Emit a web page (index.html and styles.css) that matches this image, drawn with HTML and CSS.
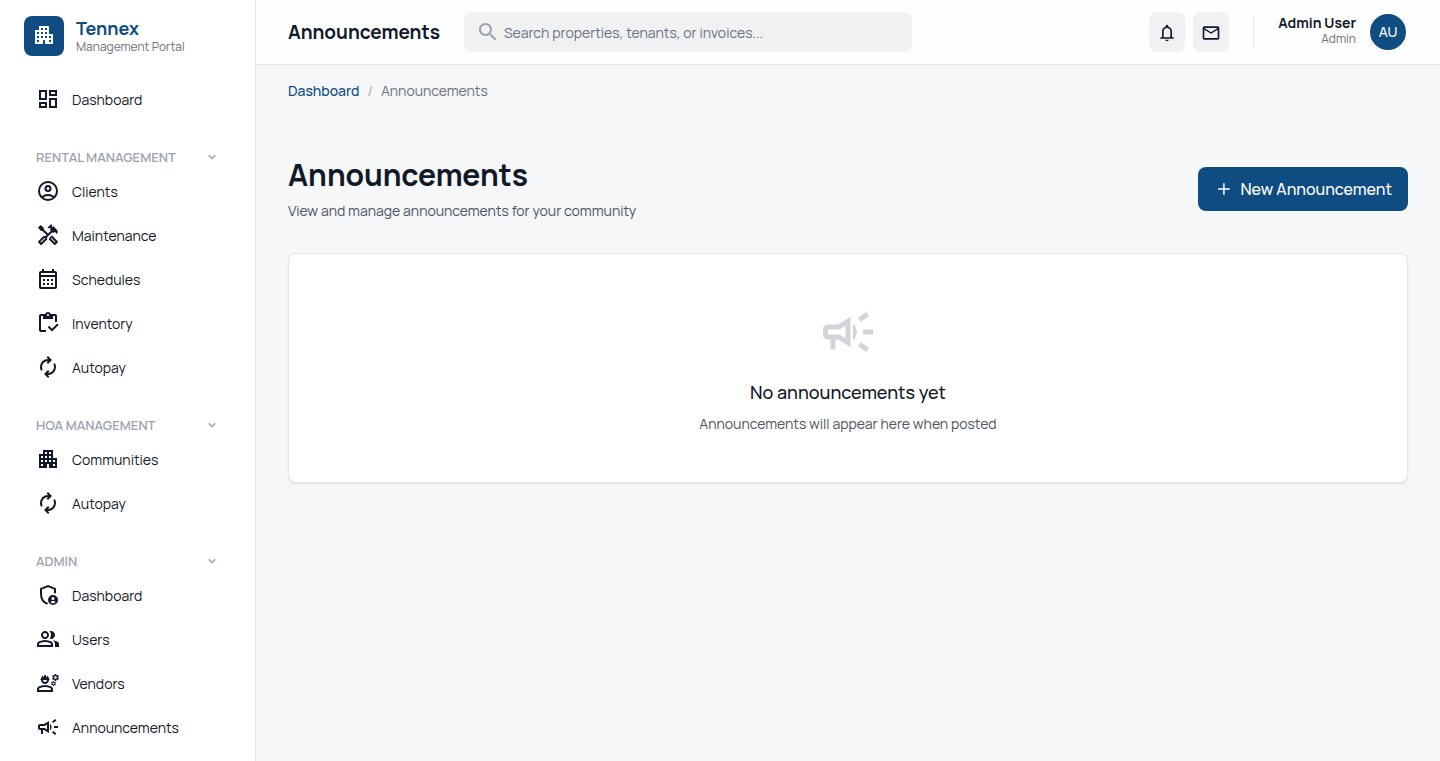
FILE: index.html
```html
<!DOCTYPE html>
<html lang="en">
<head>
    <meta charset="UTF-8">
    <meta name="viewport" content="width=device-width, initial-scale=1.0">
    <title>Announcements - Tennex</title>
    <link rel="stylesheet" href="styles.css">
</head>
<body>
    <!-- Shared icons -->
    <svg class="icon-defs" aria-hidden="true">
        <symbol id="apartment" viewBox="0 0 24 24"><path d="M17 11V3H7v4H3v14h8v-4h2v4h8V11h-4zM7 19H5v-2h2v2zm0-4H5v-2h2v2zm0-4H5V9h2v2zm4 4H9v-2h2v2zm0-4H9V9h2v2zm0-4H9V5h2v2zm4 8h-2v-2h2v2zm0-4h-2V9h2v2zm0-4h-2V5h2v2zm4 12h-2v-2h2v2zm0-4h-2v-2h2v2z"/></symbol>
        <symbol id="autorenew" viewBox="0 0 24 24"><path d="M5.1 16.05q-.55-.95-.825-1.95T4 12.05q0-3.35 2.325-5.7T12 4h.175l-1.6-1.6 1.4-1.4 4 4-4 4-1.4-1.4 1.6-1.6H12Q9.5 6 7.75 7.7625T6 12.05q0 .65.15 1.275T6.6 14.55zM12.025 23l-4-4 4-4 1.4 1.4-1.6 1.6H12q2.5 0 4.25-1.7625T18 11.95q0-.65-.15-1.275T17.4 9.45l1.5-1.5q.55.95.825 1.95T20 11.95q0 3.35-2.325 5.7T12 20h-.175l1.6 1.6z"/></symbol>
        <symbol id="campaign" viewBox="0 0 24 24"><path d="M18 11v2h4v-2h-4zm-2 6.61c.96.71 2.21 1.65 3.2 2.39.4-.53.8-1.07 1.2-1.6-.99-.74-2.24-1.68-3.2-2.4-.4.54-.8 1.08-1.2 1.61zM20.4 5.6c-.4-.53-.8-1.07-1.2-1.6-.99.74-2.24 1.68-3.2 2.4.4.53.8 1.07 1.2 1.6.96-.72 2.21-1.65 3.2-2.4zM4 9c-1.1 0-2 .9-2 2v2c0 1.1.9 2 2 2h1v4h2v-4h1l5 3V6L8 9H4zm5.03 1.71L11 9.53v4.94l-1.97-1.18-.48-.29H4v-2h4.55l.48-.29zM15.5 12c0-1.33-.58-2.53-1.5-3.35v6.69c.92-.81 1.5-2.01 1.5-3.34z"/></symbol>
        <symbol id="chevron" viewBox="0 0 24 24"><path d="M7.4 8.6 12 13.2l4.6-4.6L18 10l-6 6-6-6z"/></symbol>
    </svg>

    <div class="layout">
        <aside class="sidebar">
            <div class="brand">
                <div class="brand-logo">
                    <svg class="icon"><use href="#apartment"/></svg>
                </div>
                <div>
                    <div class="brand-name">Tennex</div>
                    <div class="brand-sub">Management Portal</div>
                </div>
            </div>

            <nav class="nav">
                <a href="#" class="nav-link">
                    <svg class="icon" viewBox="0 0 24 24"><path d="M19 5v2h-4V5h4M9 5v6H5V5h4m10 8v6h-4v-6h4M9 17v2H5v-2h4M21 3h-8v6h8V3zM11 3H3v10h8V3zm10 8h-8v10h8V11zm-10 4H3v6h8v-6z"/></svg>
                    Dashboard
                </a>

                <button type="button" class="nav-section">
                    Rental Management
                    <svg class="icon icon-chevron"><use href="#chevron"/></svg>
                </button>
                <a href="#" class="nav-link">
                    <svg class="icon icon-line" viewBox="0 0 24 24"><circle cx="12" cy="12" r="9"/><circle cx="12" cy="9.5" r="2.5"/><path d="M6 18.2c1.7-1.4 3.7-2.2 6-2.2s4.3.8 6 2.2"/></svg>
                    Clients
                </a>
                <a href="#" class="nav-link">
                    <svg class="icon" viewBox="0 0 24 24"><path d="M21.67 18.17l-5.3-5.3h-.99l-2.54 2.54v.99l5.3 5.3c.39.39 1.02.39 1.41 0l2.12-2.12c.39-.38.39-1.02 0-1.41zm-2.83 1.42l-4.24-4.24.71-.71 4.24 4.24-.71.71z"/><path d="M17.34 10.19l1.41-1.41 2.12 2.12c1.17-1.17 1.17-3.07 0-4.24l-3.54-3.54-1.41 1.41V1.71L15.22 1l-3.54 3.54.71.71h2.83l-1.41 1.41 1.06 1.06-2.89 2.89-4.13-4.13V5.06L4.83 2.04 2 4.87 5.03 7.9h1.41l4.13 4.13-.85.85H7.6l-5.3 5.3c-.39.39-.39 1.02 0 1.41l2.12 2.12c.39.39 1.02.39 1.41 0l5.3-5.3v-2.12l5.15-5.15 1.06 1.05zm-7.96 5.15l-4.24 4.24-.71-.71 4.24-4.24.71.71z"/></svg>
                    Maintenance
                </a>
                <a href="#" class="nav-link">
                    <svg class="icon" viewBox="0 0 24 24"><path d="M19 4h-1V2h-2v2H8V2H6v2H5c-1.11 0-1.99.9-1.99 2L3 20c0 1.1.89 2 2 2h14c1.1 0 2-.9 2-2V6c0-1.1-.9-2-2-2zm0 16H5V10h14v10zm0-12H5V6h14v2zM9 14H7v-2h2v2zm4 0h-2v-2h2v2zm4 0h-2v-2h2v2zm-8 4H7v-2h2v2zm4 0h-2v-2h2v2zm4 0h-2v-2h2v2z"/></svg>
                    Schedules
                </a>
                <a href="#" class="nav-link">
                    <svg class="icon" viewBox="0 0 24 24"><path d="M5 5h2v3h10V5h2v6h2V5c0-1.1-.9-2-2-2h-4.18C14.4 1.84 13.3 1 12 1S9.6 1.84 9.18 3H5c-1.1 0-2 .9-2 2v14c0 1.1.9 2 2 2h5v-2H5V5zm7-2c.55 0 1 .45 1 1s-.45 1-1 1-1-.45-1-1 .45-1 1-1z"/><path d="M21.2 12.5 22.6 13.9 16 20.5 11.7 16.2 13.1 14.8 16 17.7z"/></svg>
                    Inventory
                </a>
                <a href="#" class="nav-link">
                    <svg class="icon"><use href="#autorenew"/></svg>
                    Autopay
                </a>

                <button type="button" class="nav-section">
                    HOA Management
                    <svg class="icon icon-chevron"><use href="#chevron"/></svg>
                </button>
                <a href="#" class="nav-link">
                    <svg class="icon"><use href="#apartment"/></svg>
                    Communities
                </a>
                <a href="#" class="nav-link">
                    <svg class="icon"><use href="#autorenew"/></svg>
                    Autopay
                </a>

                <button type="button" class="nav-section">
                    Admin
                    <svg class="icon icon-chevron"><use href="#chevron"/></svg>
                </button>
                <a href="#" class="nav-link">
                    <svg class="icon" viewBox="0 0 24 24"><path class="shield" d="M19 10.3V5.9L12 3.1 5 5.9V11c0 4.5 2.7 8.5 6.6 9.9"/><path fill-rule="evenodd" d="M17 12a5 5 0 1 0 0 10 5 5 0 0 0 0-10zm0 2a1.5 1.5 0 1 1 0 3 1.5 1.5 0 0 1 0-3zm0 6.2c-1 0-1.9-.5-2.5-1.3.7-.5 1.6-.8 2.5-.8s1.8.3 2.5.8c-.6.8-1.5 1.3-2.5 1.3z"/></svg>
                    Dashboard
                </a>
                <a href="#" class="nav-link">
                    <svg class="icon" viewBox="0 0 24 24"><path d="M1 20v-2.8q0-.85.4375-1.5625T2.6 14.55q1.55-.775 3.15-1.1625T9 13t3.25.3875 3.15 1.1625q.725.375 1.1625 1.0875T17 17.2V20zm18 0v-3q0-1.1-.6125-2.1125T16.65 13.15q1.275.15 2.4.5125t2.1.8875q.9.5 1.375 1.1125T23 17v3zM9 12q-1.65 0-2.825-1.175T5 8t1.175-2.825T9 4t2.825 1.175T13 8t-1.175 2.825T9 12m10-4q0 1.65-1.175 2.825T15 12q-.275 0-.7-.0625T13.6 11.8q.675-.8 1.0375-1.775T15 8t-.3625-2.025T13.6 4.2q.35-.125.7-.1625T15 4q1.65 0 2.825 1.175T19 8M3 18h12v-.8q0-.275-.1375-.5T14.5 16.35q-1.35-.675-2.725-1.0125T9 15t-2.775.3375T3.5 16.35q-.225.125-.3625.35T3 17.2zm6-8q.825 0 1.4125-.5875T11 8t-.5875-1.4125T9 6t-1.4125.5875T7 8t.5875 1.4125T9 10"/></svg>
                    Users
                </a>
                <a href="#" class="nav-link">
                    <svg class="icon" viewBox="0 0 24 24"><path d="M1 21v-2.8q0-.85.4375-1.5625T2.6 15.55q1.55-.775 3.15-1.1625T9 14t3.25.3875 3.15 1.1625q.725.375 1.1625 1.0875T17 18.2V21zm2-2h12v-.8q0-.275-.1375-.5T14.5 17.35q-1.35-.675-2.725-1.0125T9 16t-2.775.3375T3.5 17.35q-.225.125-.3625.35T3 18.2z"/><path d="M4.74 9H5c0 2.21 1.79 4 4 4s4-1.79 4-4h.26c.27 0 .49-.22.49-.49v-.02c0-.27-.22-.49-.49-.49H13c0-1.48-.81-2.75-2-3.45v.95c0 .28-.22.5-.5.5s-.5-.22-.5-.5V4.14C9.68 4.06 9.35 4 9 4s-.68.06-1 .14V5.5c0 .28-.22.5-.5.5S7 5.78 7 5.5v-.95C5.81 5.25 5 6.52 5 8h-.26c-.27 0-.49.22-.49.49v.03c0 .26.22.48.49.48zM11 9c0 1.1-.9 2-2 2s-2-.9-2-2h4z"/><path d="M21.98 6.23l.93-.83-.75-1.3-1.19.39c-.14-.11-.3-.2-.47-.27L20.25 3h-1.5l-.25 1.22c-.17.07-.33.16-.48.27l-1.18-.39-.75 1.3.93.83c-.02.17-.02.35 0 .52l-.93.85.75 1.3 1.2-.38c.13.1.28.18.43.25l.28 1.23h1.5l.27-1.22c.16-.07.3-.15.44-.25l1.19.38.75-1.3-.93-.85c.03-.19.02-.36.01-.53zM19.5 7.75c-.69 0-1.25-.56-1.25-1.25s.56-1.25 1.25-1.25 1.25.56 1.25 1.25-.56 1.25-1.25 1.25z"/><path d="M19.4 10.79l-.85.28c-.1-.08-.21-.14-.33-.19l-.18-.88h-1.07l-.18.87c-.12.05-.24.12-.34.19l-.84-.28-.54.93.66.59c-.01.13-.01.25 0 .37l-.66.61.54.93.86-.27c.1.07.2.13.31.18l.18.88h1.07l.19-.87c.11-.05.22-.11.32-.18l.85.27.54-.93-.66-.61c.01-.13.01-.25 0-.37l.66-.59-.53-.93zm-1.9 2.6c-.49 0-.89-.4-.89-.89s.4-.89.89-.89.89.4.89.89-.4.89-.89.89z"/></svg>
                    Vendors
                </a>
                <a href="#" class="nav-link">
                    <svg class="icon"><use href="#campaign"/></svg>
                    Announcements
                </a>
            </nav>
        </aside>

        <div class="main">
            <header class="topbar">
                <div class="topbar-title">Announcements</div>
                <label class="search">
                    <svg class="icon" viewBox="0 0 24 24"><path d="M15.5 14h-.79l-.28-.27C15.41 12.59 16 11.11 16 9.5 16 5.91 13.09 3 9.5 3S3 5.91 3 9.5 5.91 16 9.5 16c1.61 0 3.09-.59 4.23-1.57l.27.28v.79l5 4.99L20.49 19l-4.99-5zm-6 0C7.01 14 5 11.99 5 9.5S7.01 5 9.5 5 14 7.01 14 9.5 11.99 14 9.5 14z"/></svg>
                    <input type="search" class="search-input" aria-label="Search" placeholder="Search properties, tenants, or invoices...">
                </label>
                <div class="topbar-actions">
                    <button type="button" class="icon-btn" aria-label="Notifications">
                        <svg class="icon" viewBox="0 0 24 24"><path d="M4 19v-2h2v-7q0-2.075 1.25-3.6875T10.5 4.2v-.7q0-.625.4375-1.0625T12 2t1.0625.4375T13.5 3.5v.7q2 .5 3.25 2.1125T18 10v7h2v2zm8 3q-.825 0-1.4125-.5875T10 20h4q0 .825-.5875 1.4125T12 22m-4-5h8v-7q0-1.65-1.175-2.825T12 6 9.175 7.175 8 10z"/></svg>
                    </button>
                    <button type="button" class="icon-btn" aria-label="Messages">
                        <svg class="icon" viewBox="0 0 24 24"><path d="M22 6c0-1.1-.9-2-2-2H4c-1.1 0-2 .9-2 2v12c0 1.1.9 2 2 2h16c1.1 0 2-.9 2-2V6zm-2 0l-8 5-8-5h16zm0 12H4V8l8 5 8-5v10z"/></svg>
                    </button>
                </div>
                <div class="user">
                    <div class="user-info">
                        <div class="user-name">Admin User</div>
                        <div class="user-role">Admin</div>
                    </div>
                    <div class="avatar">AU</div>
                </div>
            </header>

            <main class="content">
                <nav class="breadcrumb" aria-label="Breadcrumb">
                    <a href="#">Dashboard</a>
                    <span class="breadcrumb-sep">/</span>
                    <span>Announcements</span>
                </nav>

                <div class="page-header">
                    <div>
                        <h1>Announcements</h1>
                        <p>View and manage announcements for your community</p>
                    </div>
                    <button type="button" class="primary-btn">
                        <svg class="icon" viewBox="0 0 24 24"><path d="M11 12.8H5v-1.8h6V5h1.8v6h6v1.8h-6v6H11z"/></svg>
                        New Announcement
                    </button>
                </div>

                <section class="empty-card">
                    <svg class="icon empty-icon"><use href="#campaign"/></svg>
                    <h2>No announcements yet</h2>
                    <p>Announcements will appear here when posted</p>
                </section>
            </main>
        </div>
    </div>
</body>
</html>
```
FILE: styles.css
```css
* { margin: 0; padding: 0; box-sizing: border-box; }

body {
    font-family: Manrope, Inter, sans-serif;
    font-size: 14px;
    line-height: 20px;
    color: #111827;
    background: #f5f7f9;
}

a { color: inherit; text-decoration: none; }

button, input {
    font: inherit;
    color: inherit;
    border: none;
    background: none;
}

button { cursor: pointer; }

.icon-defs {
    display: none;
}

.icon {
    width: 24px;
    height: 24px;
    flex-shrink: 0;
    fill: currentColor;
}

.layout {
    display: flex;
    height: 100vh;
}

/* Sidebar */
.sidebar {
    width: 256px;
    flex-shrink: 0;
    background: #fff;
    border-right: 1px solid #e5e7eb;
    overflow: hidden;
}

.brand {
    display: flex;
    align-items: center;
    gap: 12px;
    height: 72px;
    padding: 0 24px;
}

.brand-logo {
    display: flex;
    align-items: center;
    justify-content: center;
    width: 40px;
    height: 40px;
    padding-bottom: 2px;
    border-radius: 8px;
    background: #0f4c81;
    color: #fff;
}

.brand-name {
    font-size: 18px;
    line-height: 22px;
    font-weight: 700;
    color: #0f4c81;
}

.brand-sub {
    font-size: 12px;
    line-height: 16px;
    color: #6b7280;
}

.nav {
    padding: 6px 24px;
}

.nav-link {
    display: flex;
    align-items: center;
    gap: 12px;
    height: 44px;
    padding: 0 12px;
}

.nav-link .icon {
    margin-bottom: 2px;
}

.icon-line,
.shield {
    fill: none;
    stroke: currentColor;
    stroke-width: 2;
}

.nav-section {
    display: flex;
    align-items: center;
    justify-content: space-between;
    width: 100%;
    height: 24px;
    margin-top: 24px;
    padding: 0 12px 2px;
    font-size: 13px;
    font-weight: 600;
    text-transform: uppercase;
    color: #9ca3af;
}

.icon-chevron {
    width: 14px;
    height: 14px;
    stroke: currentColor;
}

/* Top bar */
.main {
    flex: 1;
    min-width: 0;
    overflow: auto;
}

.topbar {
    display: flex;
    align-items: center;
    height: 65px;
    padding: 0 32px;
    background: #fdfefe;
    border-bottom: 1px solid #e5e7eb;
}

.topbar-title {
    font-size: 19px;
    line-height: 28px;
    font-weight: 700;
    margin-right: 24px;
}

.search {
    display: flex;
    align-items: center;
    gap: 4px;
    flex: 0 1 448px;
    height: 40px;
    padding: 0 12px;
    border-radius: 8px;
    background: #f0f1f3;
    color: #9ca3af;
}

.search-input {
    flex: 1;
    min-width: 0;
    padding-top: 2px;
    color: #111827;
    outline: none;
}

.search-input::placeholder {
    color: #6b7280;
}

.topbar-actions {
    display: flex;
    gap: 8px;
    margin-left: auto;
}

.icon-btn {
    display: flex;
    align-items: center;
    justify-content: center;
    width: 36px;
    height: 40px;
    padding-top: 2px;
    border-radius: 8px;
    background: #f0f1f3;
}

.icon-btn .icon {
    width: 20px;
    height: 20px;
}

.user {
    display: flex;
    align-items: center;
    gap: 12px;
    height: 32px;
    margin-left: 24px;
    padding-left: 24px;
    border-left: 1px solid #e5e7eb;
}

.user-info {
    padding-bottom: 2px;
    text-align: right;
}

.user-name {
    line-height: 16px;
    font-weight: 700;
}

.user-role {
    font-size: 12px;
    line-height: 16px;
    color: #6b7280;
}

.avatar {
    display: flex;
    align-items: center;
    justify-content: center;
    width: 40px;
    height: 40px;
    border: 2px solid #fff;
    border-radius: 50%;
    background: #0f4c81;
    color: #fff;
    font-weight: 500;
    box-shadow: 0 1px 2px rgba(0, 0, 0, 0.05);
}

/* Page content */
.content {
    padding: 16px 32px;
}

.breadcrumb {
    display: flex;
    gap: 8px;
    color: #6b7280;
}

.breadcrumb a {
    font-weight: 500;
    color: #0f4c81;
}

.breadcrumb-sep {
    color: #9ca3af;
}

.page-header {
    display: flex;
    align-items: center;
    justify-content: space-between;
    margin: 56px 0 32px;
}

.page-header h1 {
    font-size: 30px;
    line-height: 36px;
    font-weight: 700;
}

.page-header p {
    margin-top: 8px;
    color: #4b5563;
}

.primary-btn {
    display: flex;
    align-items: center;
    gap: 6px;
    height: 44px;
    padding: 0 16px;
    border-radius: 8px;
    background: #0f4c81;
    color: #fff;
    font-size: 16px;
    font-weight: 500;
}

.primary-btn .icon {
    width: 20px;
    height: 20px;
}

.empty-card {
    display: flex;
    flex-direction: column;
    align-items: center;
    padding: 48px 24px;
    border: 1px solid #e5e7eb;
    border-radius: 8px;
    background: #fff;
    box-shadow: 0 1px 2px rgba(0, 0, 0, 0.1);
}

.empty-icon {
    width: 60px;
    height: 60px;
    color: #d1d5db;
}

.empty-card h2 {
    margin-top: 16px;
    font-size: 18px;
    line-height: 28px;
    font-weight: 500;
}

.empty-card p {
    margin-top: 8px;
    color: #4b5563;
}
```
